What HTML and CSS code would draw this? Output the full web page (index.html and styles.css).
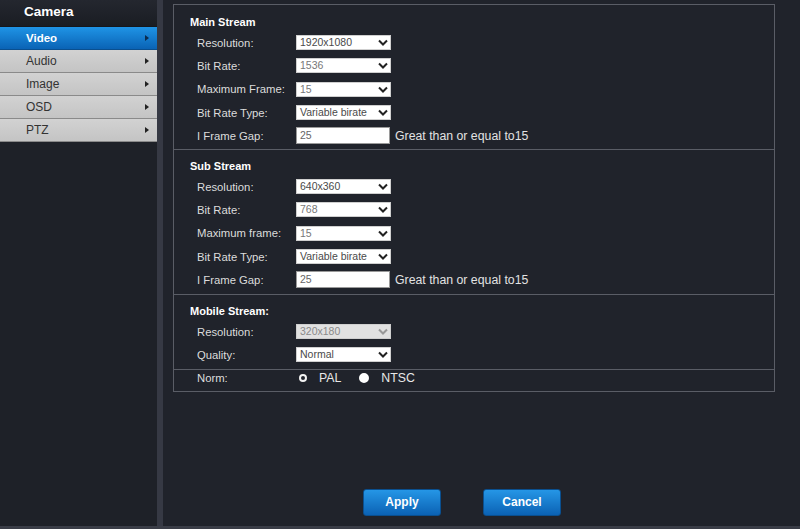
FILE: index.html
```html
<!DOCTYPE html>
<html>
<head>
<meta charset="utf-8">
<link rel="stylesheet" href="styles.css">
</head>
<body>
<div class="page">
  <aside class="sidebar">
    <div class="side-title">Camera</div>
    <ul class="menu">
      <li class="item active">Video<span class="arrow"></span></li>
      <li class="item">Audio<span class="arrow"></span></li>
      <li class="item">Image<span class="arrow"></span></li>
      <li class="item">OSD<span class="arrow"></span></li>
      <li class="item">PTZ<span class="arrow"></span></li>
    </ul>
  </aside>
  <div class="divider"></div>
  <main class="main">
    <div class="panel">
      <section class="sec s1">
        <div class="sec-title">Main Stream</div>
        <div class="row"><span class="lbl">Resolution:</span><div class="sel dark">1920x1080<svg class="chev" viewBox="0 0 10 6"><path d="M1 1 L5 5 L9 1"/></svg></div></div>
        <div class="row"><span class="lbl">Bit Rate:</span><div class="sel">1536<svg class="chev" viewBox="0 0 10 6"><path d="M1 1 L5 5 L9 1"/></svg></div></div>
        <div class="row"><span class="lbl">Maximum Frame:</span><div class="sel">15<svg class="chev" viewBox="0 0 10 6"><path d="M1 1 L5 5 L9 1"/></svg></div></div>
        <div class="row"><span class="lbl">Bit Rate Type:</span><div class="sel dark">Variable birate<svg class="chev" viewBox="0 0 10 6"><path d="M1 1 L5 5 L9 1"/></svg></div></div>
        <div class="row"><span class="lbl">I Frame Gap:</span><div class="inp">25</div><span class="hint">Great than or equal to15</span></div>
      </section>
      <section class="sec s2">
        <div class="sec-title">Sub Stream</div>
        <div class="row"><span class="lbl">Resolution:</span><div class="sel dark">640x360<svg class="chev" viewBox="0 0 10 6"><path d="M1 1 L5 5 L9 1"/></svg></div></div>
        <div class="row"><span class="lbl">Bit Rate:</span><div class="sel">768<svg class="chev" viewBox="0 0 10 6"><path d="M1 1 L5 5 L9 1"/></svg></div></div>
        <div class="row"><span class="lbl">Maximum frame:</span><div class="sel">15<svg class="chev" viewBox="0 0 10 6"><path d="M1 1 L5 5 L9 1"/></svg></div></div>
        <div class="row"><span class="lbl">Bit Rate Type:</span><div class="sel dark">Variable birate<svg class="chev" viewBox="0 0 10 6"><path d="M1 1 L5 5 L9 1"/></svg></div></div>
        <div class="row"><span class="lbl">I Frame Gap:</span><div class="inp">25</div><span class="hint">Great than or equal to15</span></div>
      </section>
      <section class="sec s3">
        <div class="sec-title">Mobile Stream:</div>
        <div class="row"><span class="lbl">Resolution:</span><div class="sel disabled">320x180<svg class="chev" viewBox="0 0 10 6"><path d="M1 1 L5 5 L9 1"/></svg></div></div>
        <div class="row"><span class="lbl">Quality:</span><div class="sel dark">Normal<svg class="chev" viewBox="0 0 10 6"><path d="M1 1 L5 5 L9 1"/></svg></div></div>
      </section>
      <section class="sec s4">
        <div class="row norm"><span class="lbl">Norm:</span>
          <span class="radio checked"></span><span class="ropt">PAL</span>
          <span class="radio"></span><span class="ropt">NTSC</span>
        </div>
      </section>
    </div>
    <div class="actions">
      <button class="btn">Apply</button>
      <button class="btn">Cancel</button>
    </div>
  </main>
</div>
</body>
</html>
```
FILE: styles.css
```css
html, body {
  margin: 0;
  padding: 0;
}
body {
  width: 800px;
  height: 529px;
  overflow: hidden;
  background: #20232b;
  font-family: "Liberation Sans", Arial, sans-serif;
}
.page {
  display: flex;
  height: 526px;
  border-bottom: 3px solid #3a3d47;
}
.sidebar {
  width: 157px;
  flex: none;
  background: #1e2128;
}
.side-title {
  height: 26px;
  line-height: 24px;
  padding-left: 24px;
  color: #fff;
  font-weight: bold;
  font-size: 13.5px;
  background: linear-gradient(#24272f, #1a1d23);
  border-bottom: 1px solid #15171c;
}
.menu {
  list-style: none;
  margin: 0;
  padding: 0;
}
.item {
  position: relative;
  height: 22px;
  line-height: 22px;
  padding-left: 26px;
  font-size: 12px;
  color: #333;
  background: linear-gradient(#d2d2d2, #c4c4c4);
  border-bottom: 1px solid #8a8a8a;
}
.item.active {
  color: #fff;
  font-weight: bold;
  font-size: 11.5px;
  background: linear-gradient(#1f94e6, #0a63b5);
  border-bottom: 1px solid #0a4f8f;
}
.arrow {
  position: absolute;
  right: 8px;
  top: 8px;
  width: 0;
  height: 0;
  border-top: 3px solid transparent;
  border-bottom: 3px solid transparent;
  border-left: 4px solid #222;
}
.item.active .arrow {
  border-left-color: #0b2c4e;
}
.divider {
  width: 6px;
  flex: none;
  background: #363944;
}
.main {
  flex: 1;
  padding: 4px 0 0 10px;
  display: flex;
  flex-direction: column;
}
.panel {
  width: 600px;
  border: 1px solid #5a5d66;
}
.sec {
  padding-left: 16px;
  border-bottom: 1px solid #5a5d66;
}
.sec:last-child {
  border-bottom: none;
}
.s1 { padding-top: 9px; padding-bottom: 1.5px; }
.s2 { padding-top: 8px; padding-bottom: 2.5px; }
.s3 { padding-top: 8px; padding-bottom: 2.4px; }
.s4 { padding-top: 0; padding-bottom: 4px; }
.sec-title {
  height: 17px;
  line-height: 17px;
  font-size: 11px;
  font-weight: bold;
  color: #fff;
}
.row {
  display: flex;
  align-items: center;
  height: 23.3px;
  padding-left: 7px;
}
.lbl {
  width: 99px;
  flex: none;
  font-size: 11.3px;
  color: #dcdcdc;
}
.sel {
  position: relative;
  width: 90px;
  height: 13px;
  line-height: 13px;
  padding-left: 3px;
  background: #fff;
  color: #777;
  font-size: 10.5px;
  border: 1px solid #cfcfcf;
  box-sizing: content-box;
}
.sel.dark { color: #4a4a4a; }
.sel.disabled {
  background: #e1e1e1;
  color: #8a8a8a;
}
.chev {
  position: absolute;
  right: 2px;
  top: 3px;
  width: 10px;
  height: 7px;
  fill: none;
  stroke: #222;
  stroke-width: 2;
}
.sel.disabled .chev { stroke: #999; }
.inp {
  width: 89px;
  height: 15px;
  line-height: 15px;
  padding-left: 3px;
  background: #fff;
  border: 1px solid #9a9a9a;
  color: #666;
  font-size: 10.5px;
}
.hint {
  margin-left: 5px;
  font-size: 12.3px;
  color: #e2e2e2;
}
.norm {
  height: 17px;
}
.radio {
  width: 6px;
  height: 6px;
  border-radius: 50%;
  background: #fff;
  border: 2px solid #fff;
  margin-left: 2px;
}
.radio.checked {
  background: #20232b;
  border: 2.5px solid #f2f2f2;
  width: 4px;
  height: 4px;
  margin-left: 3px;
}
.ropt {
  font-size: 12.3px;
  color: #e8e8e8;
  margin-left: 12px;
  margin-right: 16px;
}
.actions {
  display: flex;
  gap: 42px;
  padding-left: 190px;
  margin-top: 97px;
}
.btn {
  width: 78px;
  height: 27px;
  border: 1px solid #0a4f8f;
  border-radius: 3px;
  background: linear-gradient(#2596e6, #0b62b4);
  color: #fff;
  font-family: "Liberation Sans", Arial, sans-serif;
  font-weight: bold;
  font-size: 12px;
  padding: 0;
}
```
